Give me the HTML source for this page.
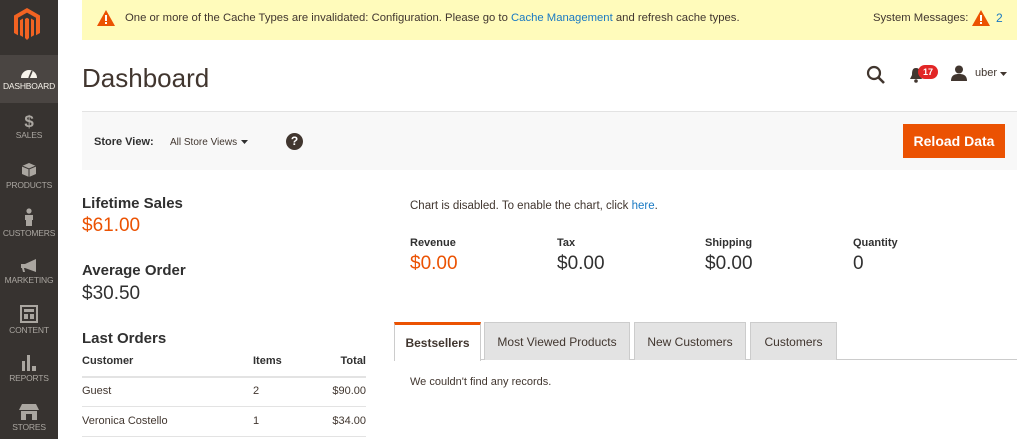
<!DOCTYPE html>
<html><head><meta charset="utf-8"><style>
*{margin:0;padding:0;box-sizing:border-box}
body{width:1024px;height:439px;overflow:hidden;background:#fff;font-family:"Liberation Sans",sans-serif;color:#303030;position:relative}
.abs{position:absolute;white-space:nowrap}
#side{position:absolute;left:0;top:0;width:58px;height:439px;background:#373330}
.nav{position:absolute;left:0;width:58px;text-align:center;color:#aaa6a0;font-size:8.5px;letter-spacing:-0.2px}
.nav svg{display:block;margin:0 auto 2px}
.b{font-weight:bold}
.th{font-size:11px;font-weight:bold;color:#303030}
.td{font-size:11px;color:#41362f}
.line{position:absolute;left:82px;width:284px;height:1px;background:#e3e3e3}
.tab{position:absolute;top:322px;height:38px;background:#e3e3e3;border:1px solid #ccc;border-bottom:none;font-size:12px;color:#41362f;text-align:center;line-height:38px}
</style></head><body>
<div id="side">
<svg class="abs" style="left:12px;top:7px" width="30" height="34" viewBox="0 0 30 34"><path d="M15 1 L28 8.5 V26 L24 28.3 V10.8 L15 5.6 L6 10.8 V28.3 L2 26 V8.5 Z M13 12 L15 10.8 L17 12 V31 L15 33 L13 31 Z M8 13.3 L11 11.5 V30 L8 28.3 Z M22 13.3 L19 11.5 V30 L22 28.3 Z" fill="#f26322"/></svg>
<div style="position:absolute;left:0;top:55px;width:58px;height:48px;background:#4a4542"></div>
<div class="nav" style="top:67px;color:#f7f3eb"><svg width="18" height="12" viewBox="0 0 18 12"><path d="M1 11 A8 8 0 0 1 17 11 Z" fill="#f7f3eb"/><path d="M9 11 L12 4" stroke="#4a4542" stroke-width="1.6"/></svg>DASHBOARD</div>
<div class="nav" style="top:113px"><div style="font-size:17px;font-weight:bold;line-height:17px;color:#aaa6a0">$</div>SALES</div>
<div class="nav" style="top:162px"><svg width="16" height="16" viewBox="0 0 16 16"><path d="M8 1 L15 4 V12 L8 15 L1 12 V4 Z" fill="#aaa6a0"/><path d="M1 4 L8 7 L15 4 M8 7 V15" stroke="#373330" stroke-width="1" fill="none"/></svg>PRODUCTS</div>
<div class="nav" style="top:208px"><svg width="10" height="18" viewBox="0 0 10 18"><circle cx="5" cy="3" r="2.6" fill="#aaa6a0"/><path d="M1 7 H9 V12 H8 V18 H2 V12 H1 Z" fill="#aaa6a0"/></svg>CUSTOMERS</div>
<div class="nav" style="top:259px"><svg width="18" height="14" viewBox="0 0 18 14"><path d="M1 5 H5 L16 0 V13 L5 9 H4 L5 13 H3 L2 9 H1 Z" fill="#aaa6a0"/></svg>MARKETING</div>
<div class="nav" style="top:305px"><svg width="18" height="18" viewBox="0 0 18 18"><rect x="1" y="1" width="16" height="16" fill="none" stroke="#aaa6a0" stroke-width="2"/><rect x="4" y="4" width="10" height="3" fill="#aaa6a0"/><rect x="4" y="9" width="4" height="5" fill="#aaa6a0"/><rect x="10" y="9" width="4" height="5" fill="#aaa6a0"/></svg>CONTENT</div>
<div class="nav" style="top:353px"><svg width="16" height="18" viewBox="0 0 16 18"><rect x="1" y="8" width="3" height="10" fill="#aaa6a0"/><rect x="6" y="2" width="3" height="16" fill="#aaa6a0"/><rect x="11" y="13" width="4" height="5" fill="#aaa6a0"/></svg>REPORTS</div>
<div class="nav" style="top:404px"><svg width="20" height="16" viewBox="0 0 20 16"><path d="M3 0 H17 L20 6 H0 Z" fill="#aaa6a0"/><rect x="2" y="7" width="16" height="9" fill="#aaa6a0"/><rect x="7" y="10" width="6" height="6" fill="#373330"/></svg>STORES</div>
</div>

<div class="abs" style="left:82px;top:0;width:935px;height:40px;background:#fffbbb"></div>
<svg class="abs" style="left:97px;top:10px" width="18" height="16" viewBox="0 0 18 16"><path d="M9 0 L18 16 H0 Z" fill="#eb5202"/><rect x="8" y="5" width="2" height="6" fill="#fff"/><rect x="8" y="12" width="2" height="2" fill="#fff"/></svg>
<div class="abs" style="left:125px;top:12px;font-size:11.3px;color:#41362f">One or more of the Cache Types are invalidated: Configuration. Please go to <span style="color:#1979c3">Cache Management</span> and refresh cache types.</div>
<div class="abs" style="left:873px;top:12px;font-size:11.3px;color:#41362f">System Messages:</div>
<svg class="abs" style="left:972px;top:10px" width="18" height="16" viewBox="0 0 18 16"><path d="M9 0 L18 16 H0 Z" fill="#eb5202"/><rect x="8" y="5" width="2" height="6" fill="#fff"/><rect x="8" y="12" width="2" height="2" fill="#fff"/></svg>
<div class="abs" style="left:996px;top:11px;font-size:12px;color:#1979c3">2</div>

<div class="abs" style="left:82px;top:63px;font-size:26px;color:#41362f">Dashboard</div>
<svg class="abs" style="left:866px;top:65px" width="20" height="20" viewBox="0 0 20 20"><circle cx="8" cy="8" r="6" fill="none" stroke="#41362f" stroke-width="2.2"/><path d="M12.5 12.5 L18 18" stroke="#41362f" stroke-width="2.6"/></svg>
<svg class="abs" style="left:909px;top:67px" width="14" height="16" viewBox="0 0 14 16"><path d="M7 1 C3 1 3 5 3 8 L1 12 H13 L11 8 C11 5 11 1 7 1 Z" fill="#41362f"/><circle cx="7" cy="14" r="1.8" fill="#41362f"/></svg>
<div class="abs" style="left:918px;top:65px;width:20px;height:14px;border-radius:7px;background:#e22626;color:#fff;font-size:9px;font-weight:bold;text-align:center;line-height:14px">17</div>
<svg class="abs" style="left:951px;top:65px" width="16" height="16" viewBox="0 0 16 16"><circle cx="8" cy="4.5" r="4" fill="#41362f"/><path d="M0 16 C0 10 4 9 8 9 C12 9 16 10 16 16 Z" fill="#41362f"/></svg>
<div class="abs" style="left:975px;top:67px;font-size:11px;color:#41362f">uber</div>
<svg class="abs" style="left:1000px;top:72px" width="7" height="5"><path d="M0 0 H7 L3.5 4 Z" fill="#41362f"/></svg>

<div class="abs" style="left:82px;top:111px;width:935px;height:59px;background:#f8f8f8;border-top:1px solid #e3e3e3"></div>
<div class="abs b" style="left:94px;top:136px;font-size:11px;color:#303030">Store View:</div>
<div class="abs" style="left:170px;top:137px;font-size:10px;color:#41362f">All Store Views</div>
<svg class="abs" style="left:241px;top:140px" width="7" height="5"><path d="M0 0 H7 L3.5 4 Z" fill="#303030"/></svg>
<div class="abs" style="left:286px;top:133px;width:17px;height:17px;border-radius:50%;background:#41362f;color:#fff;font-size:12px;font-weight:bold;text-align:center;line-height:17px">?</div>
<div class="abs b" style="left:903px;top:124px;width:102px;height:34px;background:#eb5202;color:#fff;font-size:14px;text-align:center;line-height:34px">Reload Data</div>

<div class="abs b" style="left:82px;top:195px;font-size:15px;color:#303030">Lifetime Sales</div>
<div class="abs" style="left:82px;top:215px;font-size:19px;color:#eb5202">$61.00</div>
<div class="abs b" style="left:82px;top:262px;font-size:15px;color:#303030">Average Order</div>
<div class="abs" style="left:82px;top:283px;font-size:19px;color:#303030">$30.50</div>
<div class="abs b" style="left:82px;top:330px;font-size:15px;color:#303030">Last Orders</div>
<div class="abs th" style="left:82px;top:355px">Customer</div>
<div class="abs th" style="left:253px;top:355px">Items</div>
<div class="abs th" style="right:658px;top:355px">Total</div>
<div class="line" style="top:376px;height:2px"></div>
<div class="abs td" style="left:82px;top:385px">Guest</div>
<div class="abs td" style="left:253px;top:385px">2</div>
<div class="abs td" style="right:658px;top:385px">$90.00</div>
<div class="line" style="top:406px"></div>
<div class="abs td" style="left:82px;top:415px">Veronica Costello</div>
<div class="abs td" style="left:253px;top:415px">1</div>
<div class="abs td" style="right:658px;top:415px">$34.00</div>
<div class="line" style="top:436px"></div>

<div class="abs" style="left:410px;top:200px;font-size:11.5px;color:#41362f">Chart is disabled. To enable the chart, click <span style="color:#1979c3">here</span>.</div>
<div class="abs th" style="left:410px;top:237px">Revenue</div>
<div class="abs th" style="left:557px;top:237px">Tax</div>
<div class="abs th" style="left:705px;top:237px">Shipping</div>
<div class="abs th" style="left:853px;top:237px">Quantity</div>
<div class="abs" style="left:410px;top:253px;font-size:19px;color:#eb5202">$0.00</div>
<div class="abs" style="left:557px;top:253px;font-size:19px;color:#303030">$0.00</div>
<div class="abs" style="left:705px;top:253px;font-size:19px;color:#303030">$0.00</div>
<div class="abs" style="left:853px;top:253px;font-size:19px;color:#303030">0</div>

<div class="abs" style="left:394px;top:359px;width:623px;height:1px;background:#ccc"></div>
<div class="tab" style="left:394px;width:87px;background:#fff;border-top:3px solid #eb5202;height:39px;line-height:36px;font-weight:bold;color:#41362f;font-size:12px">Bestsellers</div>
<div class="tab" style="left:484px;width:146px">Most Viewed Products</div>
<div class="tab" style="left:634px;width:112px">New Customers</div>
<div class="tab" style="left:750px;width:87px">Customers</div>
<div class="abs" style="left:410px;top:376px;font-size:11px;color:#41362f">We couldn't find any records.</div>
</body></html>
